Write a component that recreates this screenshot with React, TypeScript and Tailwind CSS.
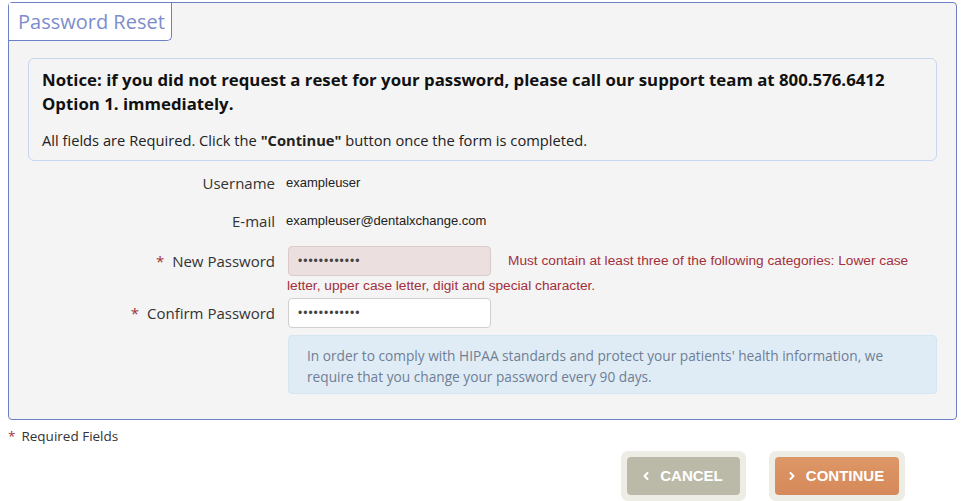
import { ChevronLeft, ChevronRight } from 'lucide-react';

const labelCls = 'w-[277px] shrink-0 pr-[11px] text-right text-[15px] text-[#333]';

function Required() {
  return <span className="mr-[8px] text-[#a3303a]">*</span>;
}

export default function App() {
  return (
    <div className="min-h-[501px] bg-white px-[8px] pt-[2px] font-['Open_Sans',sans-serif]">
      <div className="w-[949px] rounded-[4px] border border-[#6c80c8] bg-[#f4f4f4] pb-[25px]">
        <div className="flex h-[38px] w-[163px] items-center rounded-br-[5px] border-r border-b border-[#6c80c8] bg-white pl-[9px] text-[20px] text-[#7d8dcc]">
          Password Reset
        </div>

        <div className="mx-[19px] mt-[17px] rounded-[6px] border border-[#c6d7ef] px-[13px] pt-[9px] pb-[10px]">
          <p className="text-[16.8px] font-bold leading-[24px] text-[#111]">
            Notice: if you did not request a reset for your password, please call our support team at 800.576.6412 Option 1. immediately.
          </p>
          <p className="mt-[14px] text-[14.7px] leading-[20px] text-[#222]">
            All fields are Required. Click the <b>"Continue"</b> button once the form is completed.
          </p>
        </div>

        <div className="mt-[7px] flex h-[30px] items-center">
          <div className={labelCls}>Username</div>
          <div className="font-['Liberation_Sans',sans-serif] text-[13px] text-[#222]">exampleuser</div>
        </div>

        <div className="mt-[8px] flex h-[30px] items-center">
          <div className={labelCls}>E-mail</div>
          <div className="font-['Liberation_Sans',sans-serif] text-[13px] text-[#222]">exampleuser@dentalxchange.com</div>
        </div>

        <div className="mt-[10px] flex">
          <div className={`${labelCls} flex h-[30px] items-center justify-end`}>
            <Required />
            New Password
          </div>
          <div className="w-[651px] pl-[1px] font-['Liberation_Sans',sans-serif] text-[13.7px] leading-[20px]">
            <span className="mr-[17px] ml-[1px] inline-flex h-[30px] w-[203px] items-center rounded-[4px] border border-[#dccaca] bg-[#ecdfdf] pl-[9px] align-middle text-[12px] tracking-[1px] text-[#444]">
              ••••••••••••
            </span>
            <span className="text-[#a3303a]">
              Must contain at least three of the following categories: Lower case letter, upper case letter, digit and special character.
            </span>
          </div>
        </div>

        <div className="mt-[2px] flex">
          <div className={`${labelCls} flex h-[30px] items-center justify-end`}>
            <Required />
            Confirm Password
          </div>
          <div className="pl-[2px]">
            <span className="flex h-[30px] w-[203px] items-center rounded-[4px] border border-[#cfcfcf] bg-white pl-[9px] font-['Liberation_Sans',sans-serif] text-[12px] tracking-[1px] text-[#444]">
              ••••••••••••
            </span>
          </div>
        </div>

        <div className="mt-[7px] ml-[279px] mr-[19px] rounded-[4px] border border-[#d4e6f1] bg-[#dfecf5] px-[18px] pt-[9px] pb-[6px] text-[13.7px] leading-[21px] text-[#6f7e96]">
          In order to comply with HIPAA standards and protect your patients' health information, we require that you change your password every 90 days.
        </div>
      </div>

      <div className="mt-[7px] flex items-center text-[13.5px] leading-[18px] text-[#333]">
        <span className="mr-[6px] text-[#a3303a]">*</span>
        Required Fields
      </div>

      <div className="mt-[6px] flex gap-[23px] pl-[613px]">
        <div className="rounded-[7px] bg-[#edece5] p-[6px]">
          <button className="flex h-[38px] w-[113px] items-center justify-center gap-[8px] rounded-[4px] bg-[#bbbaa8] pr-[4px] font-['Liberation_Sans',sans-serif] text-[15px] font-bold text-white">
            <ChevronLeft size={12} strokeWidth={4} />
            CANCEL
          </button>
        </div>
        <div className="rounded-[7px] bg-[#edece5] p-[6px]">
          <button className="flex h-[38px] w-[124px] items-center justify-center gap-[8px] rounded-[4px] bg-gradient-to-b from-[#dd9766] to-[#d6895a] pr-[4px] font-['Liberation_Sans',sans-serif] text-[15px] font-bold text-white">
            <ChevronRight size={12} strokeWidth={4} />
            CONTINUE
          </button>
        </div>
      </div>
    </div>
  );
}
